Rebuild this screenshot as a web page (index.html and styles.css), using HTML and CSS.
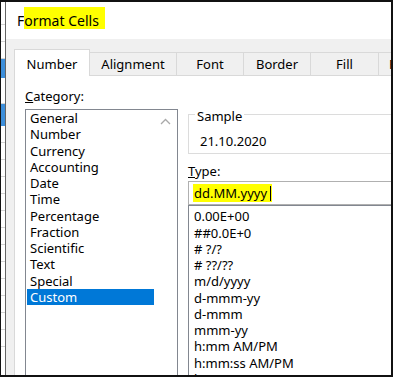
FILE: index.html
```html
<!DOCTYPE html>
<html>
<head>
<meta charset="utf-8">
<title>Format Cells</title>
<link rel="stylesheet" href="styles.css">
</head>
<body>
<div class="screen">
  <div class="sheet">
    <div class="cell c-top"></div>
    <div class="cell"></div>
    <div class="cell"></div>
    <div class="cell sel c-a"></div>
    <div class="cell c-b"></div>
    <div class="cell sel c-c"></div>
    <div class="cell"></div>
    <div class="cell"></div>
    <div class="cell"></div>
    <div class="cell"></div>
    <div class="cell"></div>
    <div class="cell"></div>
    <div class="cell"></div>
    <div class="cell"></div>
    <div class="cell"></div>
    <div class="cell"></div>
    <div class="cell"></div>
    <div class="cell"></div>
    <div class="cell"></div>
  </div>

  <div class="dialog">
    <div class="titlebar">F<span class="hl">ormat Cells</span></div>

    <div class="tabs">
      <div class="tab on">Number</div>
      <div class="tab t-align">Alignment</div>
      <div class="tab t-font">Font</div>
      <div class="tab t-border">Border</div>
      <div class="tab t-fill">Fill</div>
      <div class="tab t-prot">Protection</div>
    </div>

    <div class="panel">
      <div class="cat">
        <div class="label"><u>C</u>ategory:</div>
        <div class="listbox">
          <ul class="items">
            <li>General</li>
            <li>Number</li>
            <li>Currency</li>
            <li>Accounting</li>
            <li>Date</li>
            <li>Time</li>
            <li>Percentage</li>
            <li>Fraction</li>
            <li>Scientific</li>
            <li>Text</li>
            <li>Special</li>
            <li class="sel">Custom</li>
          </ul>
          <div class="scroll">
            <svg width="11" height="7" viewBox="0 0 11 7"><polyline points="1,6 5.5,1.5 10,6" fill="none" stroke="#a9a9a9" stroke-width="1.3"/></svg>
          </div>
        </div>
      </div>

      <div class="type">
        <fieldset class="sample">
          <legend>Sample</legend>
          <div class="value">21.10.2020</div>
        </fieldset>
        <div class="label type-label"><u>T</u>ype:</div>
        <div class="typebox"><span class="typed">dd.MM.yyyy<span class="caret"></span></span></div>
        <ul class="formats">
          <li>0.00E+00</li>
          <li>##0.0E+0</li>
          <li># ?/?</li>
          <li># ??/??</li>
          <li>m/d/yyyy</li>
          <li>d-mmm-yy</li>
          <li>d-mmm</li>
          <li>mmm-yy</li>
          <li>h:mm AM/PM</li>
          <li>h:mm:ss AM/PM</li>
          <li>h:mm</li>
        </ul>
      </div>
    </div>
  </div>
</div>
</body>
</html>
```

FILE: styles.css
```css
*{margin:0;padding:0;box-sizing:border-box;}
body{width:393px;height:377px;overflow:hidden;font-family:"Noto Sans","Open Sans",Arial,sans-serif;font-size:13px;line-height:16.25px;color:#000;}

.screen{display:flex;width:393px;height:377px;overflow:hidden;border:2px solid #111;border-left-width:1px;background:#fff;}

/* the sheet behind the dialog */
.sheet{flex:0 0 4px;display:flex;flex-direction:column;overflow:hidden;}
.cell{flex:0 0 17px;border-bottom:1px solid #d4d4d4;}
.c-top{flex-basis:23px;}
.c-a{flex-basis:19px;}
.c-b{flex-basis:26px;}
.c-c{flex-basis:22px;}
.cell.sel{background:#3d8fdb;border-bottom:none;}

.dialog{flex:0 0 480px;display:flex;flex-direction:column;border-left:1px solid #646464;background:#f0f0f0;}

.titlebar{flex-shrink:0;height:37px;padding:5px 0 0 11px;background:#fff;font-size:14px;}
.hl{display:inline-block;height:22px;line-height:16px;padding:6px 6px 0 0;background:#ffff00;}

.tabs{flex-shrink:0;height:36px;display:flex;align-items:flex-end;padding-left:8px;}
.tab{flex-shrink:0;height:23px;padding-top:3px;text-align:center;border-top:1px solid #d9d9d9;border-right:1px solid #d9d9d9;}
.tab.on{position:relative;width:76px;height:27px;margin-bottom:-1px;padding-top:6px;background:#fff;border-left:1px solid #d9d9d9;}
.t-align{width:87px;}
.t-font{width:67px;}
.t-border{width:67px;}
.t-fill{width:68px;}
.t-prot{width:90px;text-align:left;padding-left:10px;}

.panel{flex:1;min-height:0;overflow:hidden;display:flex;gap:10px;align-items:flex-start;margin-left:8px;padding:12px 0 0 10px;background:#fff;border-top:1px solid #d9d9d9;border-left:1px solid #d9d9d9;}

.cat{flex:0 0 153px;}
.cat .label{height:21px;}
.listbox{display:flex;height:300px;border:1px solid #828790;}
.items{flex:1;list-style:none;padding-left:1px;}
.items li{height:16.25px;padding-left:3px;}
.items li.sel{background:#0078d7;color:#fff;}
.scroll{flex:0 0 23px;display:flex;justify-content:center;align-items:flex-start;padding-top:8px;}

.type{flex:0 0 300px;}
.sample{margin-top:16px;padding:8.5px 0 4px 11px;border:1px solid #dcdcdc;}
.sample legend{margin-left:-5px;padding:4px 2px 0;line-height:16.25px;}
.type-label{margin-top:9px;}
.typebox{height:24px;margin-top:2px;padding:3px 0 0 4px;border:1px solid #b0b0b0;}
.typed{padding:0 1px;background:#ffff00;}
.caret{display:inline-block;width:1px;height:15px;margin-left:3px;vertical-align:-3px;background:#000;}
.formats{height:200px;list-style:none;padding:2px 0 0 5px;border:1px solid #828790;}
.formats li{height:16.25px;}
```
